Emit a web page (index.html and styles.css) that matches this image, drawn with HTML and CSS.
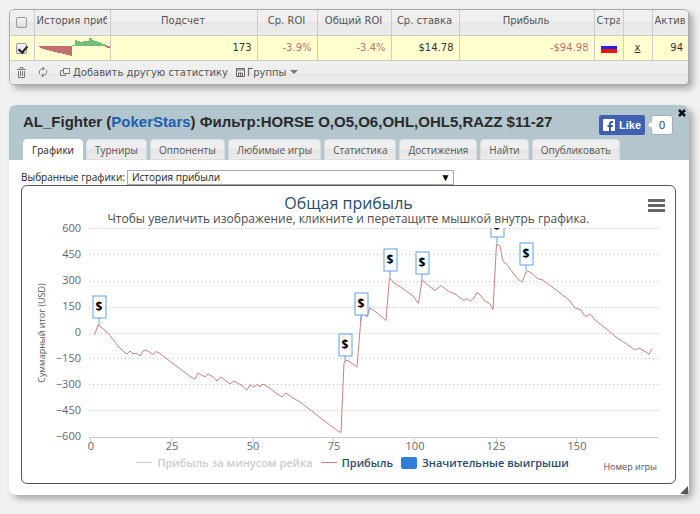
FILE: index.html
```html
<!DOCTYPE html>
<html lang="ru">
<head>
    <meta charset="UTF-8">
    <meta name="viewport" content="width=device-width, initial-scale=1.0">
    <title>AL_Fighter (PokerStars)</title>
    <link rel="stylesheet" href="styles.css">
</head>
<body>
    <section class="stats">
        <table>
            <colgroup>
                <col class="c-check"><col class="c-history"><col class="c-count"><col class="c-roi"><col class="c-total"><col class="c-stake"><col><col class="c-flag"><col class="c-flag"><col class="c-active">
            </colgroup>
            <thead>
                <tr>
                    <th><input type="checkbox" aria-label="Выбрать все"></th>
                    <th><div class="clip">История прибыли</div></th>
                    <th>Подсчет</th>
                    <th>Ср. ROI</th>
                    <th>Общий ROI</th>
                    <th>Ср. ставка</th>
                    <th>Прибыль</th>
                    <th><div class="clip">Страна</div></th>
                    <th></th>
                    <th><div class="clip">Активность</div></th>
                </tr>
            </thead>
            <tbody>
                <tr>
                    <td class="center"><input type="checkbox" aria-label="Выбрать AL_Fighter" checked></td>
                    <td class="spark">
                        <svg width="72" height="20" viewBox="0 0 72 20">
                            <path fill="#c07070" d="M0 9h33v10h-2v-1h-4v-1h-4v-1h-5v-1h-4v-1h-4v-1h-4v-1H3v-1H1v-1H0z"/>
                            <path fill="#74bf78" d="M33 9V8h3V3h2v1h3v1h3V4h6V1h3v2h2v1h3v1h3v1h2v1h3v1h2v1z"/>
                            <path fill="#c07070" d="M66 9h5v2h-3v-1h-2z"/>
                        </svg>
                    </td>
                    <td>173</td>
                    <td class="neg">-3.9%</td>
                    <td class="neg">-3.4%</td>
                    <td>$14.78</td>
                    <td class="neg">-$94.98</td>
                    <td class="center">
                        <svg width="16" height="10" viewBox="0 0 16 10">
                            <path fill="#f4f4f8" d="M0 0h16v3H0z"/>
                            <path fill="#2222e0" d="M0 3h16v3H0z"/>
                            <path fill="#e81414" d="M0 6h16v4H0z"/>
                        </svg>
                    </td>
                    <td class="center"><a href="#">x</a></td>
                    <td>94</td>
                </tr>
            </tbody>
        </table>
        <div class="toolbar">
            <button type="button" aria-label="Удалить">
                <svg width="9" height="11" viewBox="0 0 9 11" fill="none" stroke="#777">
                    <path d="M0 2.5h9M3 2V.5h3V2M1.5 4v6.5h6V4M3.5 4v5M5.500 4v5"/>
                </svg>
            </button>
            <button type="button" aria-label="Обновить">
                <svg width="10" height="10" viewBox="0 0 10 10" fill="none" stroke="#777">
                    <path d="M1.500 7A4 4 0 0 1 5 1.500h1M4.500 0l2 1.500-2 2M8.500 3A4 4 0 0 1 5 8.500H4M5.500 6.500l-2 2 2 1.500"/>
                </svg>
            </button>
            <button type="button">
                <svg width="10" height="9" viewBox="0 0 10 9" fill="none" stroke="#777">
                    <path d="M3.500.500h6v5h-6zM3.500 2.500h-3v5h5v-2"/>
                </svg>
                Добавить другую статистику
            </button>
            <button type="button" class="groups">
                <svg width="9" height="9" viewBox="0 0 9 9" fill="none" stroke="#666">
                    <path d="M.5.5h8v8h-8zM.5 2h8M2.500 8V5h4v3M4.500 5v3"/>
                </svg>
                Группы
                <span class="caret"></span>
            </button>
        </div>
    </section>

    <section class="player">
        <header>
            <div class="heading">
                <h1>AL_Fighter (<a href="#">PokerStars</a>) Фильтр:HORSE O,O5,O6,OHL,OHL5,RAZZ $11-27</h1>
                <div class="like">
                    <button type="button">
                        <svg width="12" height="12" viewBox="0 0 12 12">
                            <rect width="12" height="12" rx="1" fill="#fff"/>
                            <path fill="#3b5aa8" d="M6 12V8H4.500V6H6V4.500C6 3 7 2 8.500 2H10v2H9c-.7 0-1 .3-1 1v1h2l-.3 2H8v4z"/>
                        </svg>
                        Like
                    </button>
                    <span class="count">0</span>
                </div>
                <button type="button" class="close" aria-label="Закрыть">
                    <svg width="8" height="8" viewBox="0 0 8 8" stroke="#111" stroke-width="2.500">
                        <path d="M1 1l6 6M7 1L1 7"/>
                    </svg>
                </button>
            </div>
            <nav class="tabs">
                <a href="#" class="active">Графики</a>
                <a href="#">Турниры</a>
                <a href="#">Оппоненты</a>
                <a href="#">Любимые игры</a>
                <a href="#">Статистика</a>
                <a href="#">Достижения</a>
                <a href="#">Найти</a>
                <a href="#">Опубликовать</a>
            </nav>
        </header>

        <div class="content">
            <div class="picker">
                <label for="graph">Выбранные графики:</label>
                <div class="select">
                    <select id="graph">
                        <option>История прибыли</option>
                    </select>
                </div>
            </div>

            <div class="chart">
                <button type="button" class="menu" aria-label="Меню графика"></button>
                <h2>Общая прибыль</h2>
                <p>Чтобы увеличить изображение, кликните и перетащите мышкой внутрь графика.</p>
                <svg class="plot" viewBox="22 224 653 230">
                    <g class="grid">
                        <path d="M89 228.500h569M89 254.500h569M89 281.500h569M89 307.500h569M89 333.500h569M89 358.500h569M89 384.500h569M89 410.500h569"/>
                    </g>
                    <path class="axis" d="M89 437.500h569"/>
                    <path class="ticks" d="M90.500 438v4M171.500 438v4M253.500 438v4M333.500 438v4M414.500 438v4M496.500 438v4M576.500 438v4"/>
                    <g class="ylabels">
                        <text x="81" y="232">600</text>
                        <text x="81" y="258">450</text>
                        <text x="81" y="284">300</text>
                        <text x="81" y="310">150</text>
                        <text x="81" y="336">0</text>
                        <text x="81" y="362">−150</text>
                        <text x="81" y="388">−300</text>
                        <text x="81" y="414">−450</text>
                        <text x="81" y="440">−600</text>
                    </g>
                    <g class="xlabels">
                        <text x="91" y="450">0</text>
                        <text x="172" y="450">25</text>
                        <text x="253" y="450">50</text>
                        <text x="334" y="450">75</text>
                        <text x="415" y="450">100</text>
                        <text x="496" y="450">125</text>
                        <text x="577" y="450">150</text>
                    </g>
                    <text class="ytitle" transform="translate(45 333) rotate(-90)">Суммарный итог (USD)</text>

                    <polyline class="profit" points="94.5,335 98,325 101,327 108,333 118,346 124,352 127,354 130,351 133,353.5 137,353.5 140,356 143,351 146,350 150,352.5 153,354.5 156,351.5 160,353.5 167,359 191,377 195,379 198,373 205,377 208,374 214,377.5 217,381 221,377 230,384 234,381 241,385 247,390 250,385 254,387 257,384.5 260,386.5 263,384 271,389 278,394.5 282,397 286,393 293,398 300,402 313,412 325,421.5 338,431 341,432.5 344,363 347,360 357,367 361,318 363,313 367,317 370,308 376,312 386,320.5 389.5,277.5 394,283 402,288 413,296 418.5,303.5 422,280 429,286 435,290.5 441,285.5 448,291 455,294 464,300.5 467,298.5 470,301.5 474,298 477,292 480,295 485,301 490,304 493,309.5 496.5,244 500,246 503,261.5 507,264.5 513,273 519,280 522,282 526,272 529,271.5 532,273.5 538,279 542,279.5 555,289 569,300 575,308 581,310 584,315 587,316.5 590,314 594,319 604,327 616,337 625,343 635,350 639,348 646,352 649,354.5 652,349"/>

                    <clipPath id="area"><rect x="89" y="228" width="569" height="210"/></clipPath>
                    <g class="flags" clip-path="url(#area)">
                        <path d="M99 325v-7M345 362v-6M361 321v-6M390 277v-6M422 280v-6M497 243v-6M526 271v-6"/>
                        <rect x="93" y="296" width="13" height="22"/>
                        <rect x="339" y="334" width="13" height="22"/>
                        <rect x="355" y="293" width="13" height="22"/>
                        <rect x="384" y="249" width="13" height="22"/>
                        <rect x="416" y="252" width="13" height="22"/>
                        <rect x="491" y="215" width="13" height="22"/>
                        <rect x="520" y="243" width="13" height="22"/>
                        <text x="99" y="311">$</text>
                        <text x="345" y="349">$</text>
                        <text x="361" y="308">$</text>
                        <text x="390" y="264">$</text>
                        <text x="422" y="267">$</text>
                        <text x="497" y="230">$</text>
                        <text x="526" y="258">$</text>
                    </g>
                </svg>
                <ul class="legend">
                    <li class="off"><i class="line"></i>Прибыль за минусом рейка</li>
                    <li><i class="line"></i>Прибыль</li>
                    <li><i class="box"></i>Значительные выигрыши</li>
                </ul>
                <span class="xtitle">Номер игры</span>
            </div>
        </div>
        <svg class="resize" width="8" height="8" viewBox="0 0 8 8"><path fill="#555" d="M8 0v8H0z"/></svg>
    </section>
</body>
</html>
```
FILE: styles.css
```css
* {
    box-sizing: border-box;
}
body {
    margin: 0;
    padding: 9px 11px 18px 9px;
    background: #f1f1f1;
    font-family: "DejaVu Sans", Verdana, sans-serif;
    font-size: 10px;
    color: #333;
}
button {
    border: 0;
    padding: 0;
    background: none;
    font: inherit;
    color: inherit;
}
svg {
    display: block;
}
.stats {
    border: 1px solid #aaa;
    border-radius: 5px;
    box-shadow: 4px 4px 6px #aaa;
    overflow: hidden;
    background: #ececec;
}
table {
    width: 100%;
    table-layout: fixed;
    border-collapse: collapse;
}
.c-check { width: 24px; }
.c-history { width: 76px; }
.c-count { width: 147px; }
.c-roi { width: 60px; }
.c-total { width: 74px; }
.c-stake { width: 68px; }
.c-flag { width: 29px; }
.c-active { width: 36px; }
th, td {
    height: 25px;
    padding: 0 5px;
    border-right: 1px solid #ccc;
    white-space: nowrap;
}
th {
    padding: 0 3px 4px 2px;
    background: linear-gradient(#efefef 50%, #e6e6e6 50%, #ececec);
    border-bottom: 1px solid #ccc;
    font-weight: normal;
    color: #555;
}
.clip {
    overflow: hidden;
    text-align: left;
}
th:last-child, td:last-child {
    border-right: 0;
}
td {
    background: #ffffd0;
    border-bottom: 1px solid #ccc;
    text-align: right;
}
td.center {
    padding: 0;
    text-align: center;
}
td.center svg {
    margin: 0 auto;
}
td a {
    color: #333;
}
td.spark {
    padding: 0 0 2px 4px;
}
.neg {
    color: #c07070;
}
input[type="checkbox"] {
    appearance: none;
    display: block;
    position: relative;
    width: 11px;
    height: 11px;
    margin: 4px auto 0;
    border: 1px solid #999;
    border-radius: 2px;
    background: linear-gradient(#f4f4f4, #ddd);
}
td input[type="checkbox"] {
    margin-top: 1px;
}
input[type="checkbox"]:checked::after {
    content: "";
    position: absolute;
    left: 3px;
    top: 0;
    width: 4px;
    height: 7px;
    border: solid #222;
    border-width: 0 2px 2px 0;
    transform: rotate(40deg);
}
.toolbar {
    display: flex;
    align-items: center;
    gap: 12px;
    height: 23px;
    padding: 0 8px 0 7px;
    background: linear-gradient(#efefef 50%, #e8e8e8 50%, #ececec);
    color: #555;
}
.toolbar button {
    display: flex;
    align-items: center;
    gap: 3px;
}
.toolbar .groups {
    gap: 2px;
    margin-left: -4px;
}
.caret {
    margin-left: 2px;
    border: 4px solid transparent;
    border-top-color: #777;
    border-bottom: 0;
}

.player {
    position: relative;
    margin-top: 20px;
    border-radius: 7px;
    box-shadow: 4px 4px 6px #aaa;
    background: #fff;
}
.player header {
    padding: 0 3px 0 14px;
    border-radius: 7px 7px 0 0;
    background: #b3c6ce;
}
.heading {
    display: flex;
    align-items: center;
    height: 34px;
}
h1 {
    flex: 1;
    margin: 0;
    font: bold 15px "Liberation Sans", Arial, sans-serif;
    color: #2a2a2a;
    white-space: nowrap;
}
h1 a {
    color: #1f5fb0;
    text-decoration: none;
}
.like {
    display: flex;
    gap: 6px;
    margin: 7px 5px 0 0;
    font-family: "Liberation Sans", Arial, sans-serif;
}
.like button {
    display: flex;
    align-items: center;
    gap: 4px;
    width: 46px;
    height: 20px;
    padding-left: 4px;
    border-radius: 2px;
    background: #4060b4;
    font-size: 11px;
    font-weight: bold;
    color: #fff;
}
.count {
    position: relative;
    width: 22px;
    height: 20px;
    border: 1px solid #aab;
    border-radius: 3px;
    background: #fff;
    font-size: 11px;
    line-height: 18px;
    text-align: center;
}
.count::before {
    content: "";
    position: absolute;
    left: -3px;
    top: 7px;
    width: 4px;
    height: 4px;
    background: #fff;
    transform: rotate(45deg);
}
.close {
    align-self: flex-start;
    margin-top: 4px;
}
.tabs {
    display: flex;
    gap: 3px;
    font-family: "Open Sans", Verdana, sans-serif;
}
.tabs a {
    height: 21px;
    padding: 0 8px;
    border: 1px solid #ddd;
    border-radius: 4px 4px 0 0;
    background: linear-gradient(#efefef 50%, #e5e5e5 50%, #ececec);
    line-height: 20px;
    color: #555;
    text-decoration: none;
    white-space: nowrap;
}
.tabs a.active {
    border-color: #fff;
    background: #fff;
    color: #222;
}
.content {
    padding: 10px 13px 11px 12px;
}
.picker {
    display: flex;
    align-items: center;
    gap: 2px;
    font-family: "Open Sans", Verdana, sans-serif;
    line-height: 15px;
    color: #222;
}
.select {
    position: relative;
    width: 50%;
}
.select::after {
    content: "▼";
    position: absolute;
    right: 4px;
    top: 0;
    color: #000;
}
select {
    appearance: none;
    display: block;
    width: 100%;
    height: 15px;
    padding: 0 4px;
    border: 1px solid #aaa;
    border-radius: 0;
    background: #fff;
    font: inherit;
    line-height: 13px;
    color: #222;
}
.chart {
    position: relative;
    border: 1px solid #555;
    border-radius: 6px;
    padding-bottom: 11px;
    font-family: "Open Sans", "Lucida Grande", sans-serif;
}
h2 {
    margin: 0;
    padding-top: 6px;
    font-size: 16px;
    font-weight: normal;
    line-height: 22px;
    text-align: center;
    color: #274b6d;
}
.chart p {
    margin: 0;
    font-size: 12px;
    line-height: 10px;
    text-align: center;
    color: #4d4d4d;
}
.menu {
    position: absolute;
    right: 10px;
    top: 13px;
    width: 17px;
    height: 13px;
    background: repeating-linear-gradient(#666 0 3px, #fff 3px 5px);
}
.plot {
    width: 100%;
}
.grid {
    stroke: #c0c0c0;
    stroke-dasharray: 1 3;
}
.axis {
    stroke: #c8c8c8;
}
.ticks {
    stroke: #c0d0e0;
}
.ylabels, .xlabels {
    font-size: 11px;
    fill: #666;
    text-anchor: end;
}
.xlabels {
    text-anchor: middle;
}
.ytitle {
    font-size: 9px;
    fill: #555;
    text-anchor: middle;
}
.profit {
    fill: none;
    stroke: #c98080;
}
.flags {
    fill: #fff;
    stroke: #5f9fe6;
}
.flags text {
    fill: #000;
    stroke: none;
    font-size: 12px;
    font-weight: bold;
    text-anchor: middle;
}
.legend {
    display: flex;
    justify-content: center;
    gap: 8px;
    margin: 0;
    padding: 0 0 0 8px;
    list-style: none;
    font-size: 11px;
    font-weight: 600;
    line-height: 18px;
    color: #274b6d;
}
.legend li {
    display: flex;
    align-items: center;
    gap: 5px;
}
.legend .off {
    color: #ccc;
}
.line {
    width: 16px;
    height: 1px;
    background: #c98080;
}
.off .line {
    background: #ccc;
}
.box {
    width: 16px;
    height: 12px;
    border-radius: 2px;
    background: #2f7ed8;
}
.xtitle {
    position: absolute;
    right: 18px;
    bottom: 10px;
    font-size: 9px;
    color: #555;
}
.resize {
    position: absolute;
    right: 1px;
    bottom: 1px;
}
```
